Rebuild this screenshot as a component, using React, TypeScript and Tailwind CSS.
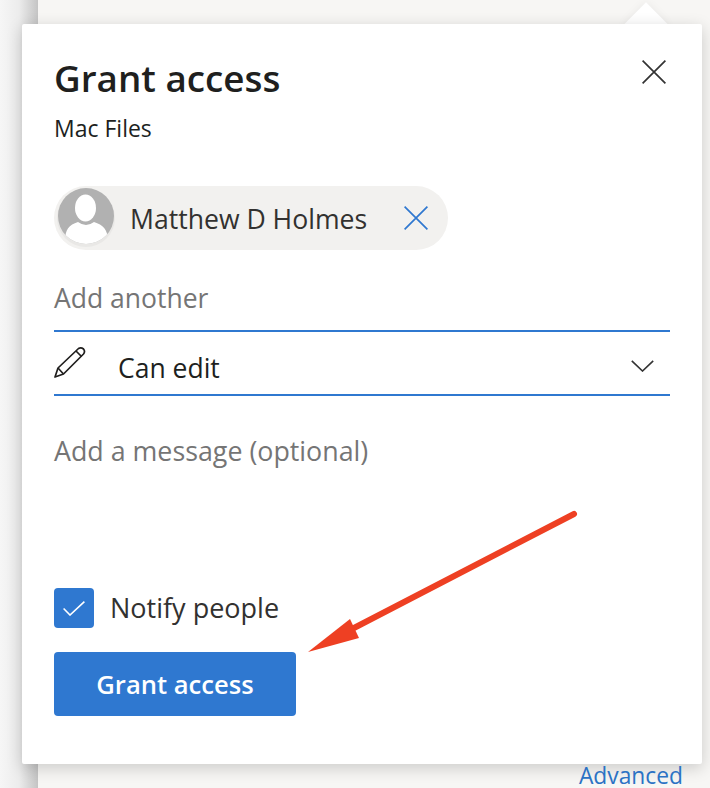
const font = "font-['Open_Sans','Noto_Sans',sans-serif]";

function CrossIcon({ className }: { className: string }) {
  return (
    <svg viewBox="0 0 24 24" className={`w-[24px] h-[24px] shrink-0 ${className}`} fill="none" stroke="currentColor" strokeWidth="1.7">
      <path d="M0.6 0.6 L23.4 23.4 M23.4 0.6 L0.6 23.4" />
    </svg>
  );
}

function Avatar() {
  return (
    <svg viewBox="0 0 58 60" className="w-[58px] h-[60px] shrink-0">
      <defs>
        <clipPath id="avatar-clip">
          <circle cx="29" cy="29" r="28" />
        </clipPath>
      </defs>
      <circle cx="29" cy="31" r="29" fill="#e9e8e6" />
      <circle cx="29" cy="29" r="28" fill="#b1b1b1" />
      <g clipPath="url(#avatar-clip)">
        <ellipse cx="28.5" cy="21" rx="10.5" ry="13.5" fill="#ffffff" />
        <path d="M8 55 C8 42 12 38 21 35 Q29 41 37 35 C46 38 51 42 51 55 Q29 66 8 55 Z" fill="#ffffff" />
      </g>
    </svg>
  );
}

function PencilIcon() {
  return (
    <svg viewBox="0 0 32 32" className="w-[32px] h-[32px] shrink-0" fill="none" stroke="#201f1e" strokeWidth="1.7" strokeLinejoin="round">
      <path d="M1 31 L4 22 L24.5 2.5 Q27 0.8 29.5 3 Q31.5 5.5 29.5 8 L9.5 28 Z" />
      <path d="M22 5 L27.5 10.5 M4 22 L9.5 28" />
    </svg>
  );
}

function Arrow() {
  return (
    <svg viewBox="0 0 710 788" className="absolute inset-0 w-[710px] h-[788px] pointer-events-none">
      <line x1="574" y1="514" x2="352" y2="629" stroke="#ee4023" strokeWidth="6" strokeLinecap="round" />
      <polygon points="308,652 350,619 359,638" fill="#ee4023" />
    </svg>
  );
}

export default function App() {
  return (
    <div className={`${font} relative w-[710px] h-[788px] overflow-hidden bg-[#f7f6f4] flex flex-col`}>
      {/* page edge behind the panel */}
      <div className="absolute left-0 top-0 bottom-0 w-[38px] bg-gradient-to-r from-[#f6f6f6] via-[#ececec] to-[#c4c4c4]" />

      {/* beak */}
      <div className="absolute left-[630px] top-[9px] w-[32px] h-[32px] rotate-45 bg-white shadow-[0_0_10px_rgba(0,0,0,0.06)]" />

      <div className="relative mt-[24px] ml-[22px] w-[680px] h-[740px] shrink-0 bg-white rounded-[2px] shadow-[0_4px_16px_rgba(0,0,0,0.18)] px-[32px] flex flex-col">
        <button className="absolute right-[36px] top-[36px] text-[#333333]">
          <CrossIcon className="" />
        </button>

        <h1 className="mt-[32px] h-[44px] leading-[44px] text-[36.8px] font-semibold text-[#201f1e]">Grant access</h1>
        <p className="mt-[13px] h-[30px] leading-[30px] text-[23px] text-[#201f1e]">Mac Files</p>

        <div className="mt-[43px] h-[64px] w-[394px] rounded-[32px] bg-[#f2f1ef] flex items-start pl-[3px] pt-[1px]">
          <Avatar />
          <span className="ml-[15px] mt-[14px] text-[26.6px] leading-[36px] text-[#323130]">Matthew D Holmes</span>
          <CrossIcon className="ml-[37px] mt-[19px] text-[#2f78d0]" />
        </div>

        <div className="mt-[32px] h-[50px] pb-[14px] border-b-2 border-[#2f78d0] flex items-center">
          <span className="text-[26.5px] text-[#757575]">Add another</span>
        </div>

        <div className="h-[64px] border-b-2 border-[#2f78d0] flex items-start">
          <div className="mt-[14px]">
            <PencilIcon />
          </div>
          <span className="ml-[32px] mt-[18px] text-[26.5px] leading-[36px] text-[#201f1e]">Can edit</span>
          <svg viewBox="0 0 23 12" className="ml-auto mr-[16px] mt-[28px] w-[23px] h-[12px]" fill="none" stroke="#333333" strokeWidth="1.6">
            <path d="M0.8 0.8 L11.5 11 L22.2 0.8" />
          </svg>
        </div>

        <p className="mt-[35px] h-[40px] leading-[40px] text-[26.8px] text-[#757575]">Add a message (optional)</p>

        <div className="mt-[117px] h-[40px] flex items-center gap-[16px]">
          <span className="w-[40px] h-[40px] rounded-[4px] bg-[#2f78d0] flex items-center justify-center">
            <svg viewBox="0 0 22 15" className="w-[22px] h-[15px]" fill="none" stroke="#ffffff" strokeWidth="1.6">
              <path d="M0.6 7.5 L7 14 L21.4 0.6" />
            </svg>
          </span>
          <span className="text-[27px] text-[#323130]">Notify people</span>
        </div>

        <button className="mt-[24px] w-[242px] h-[64px] pt-[2px] rounded-[4px] bg-[#2f78d0] text-white text-[25.6px] font-semibold">
          Grant access
        </button>
      </div>

      <div className="relative flex justify-end pr-[27px]">
        <a className="block text-[22.8px] leading-[24px] text-[#2b72c4]">Advanced</a>
      </div>

      <Arrow />
    </div>
  );
}
